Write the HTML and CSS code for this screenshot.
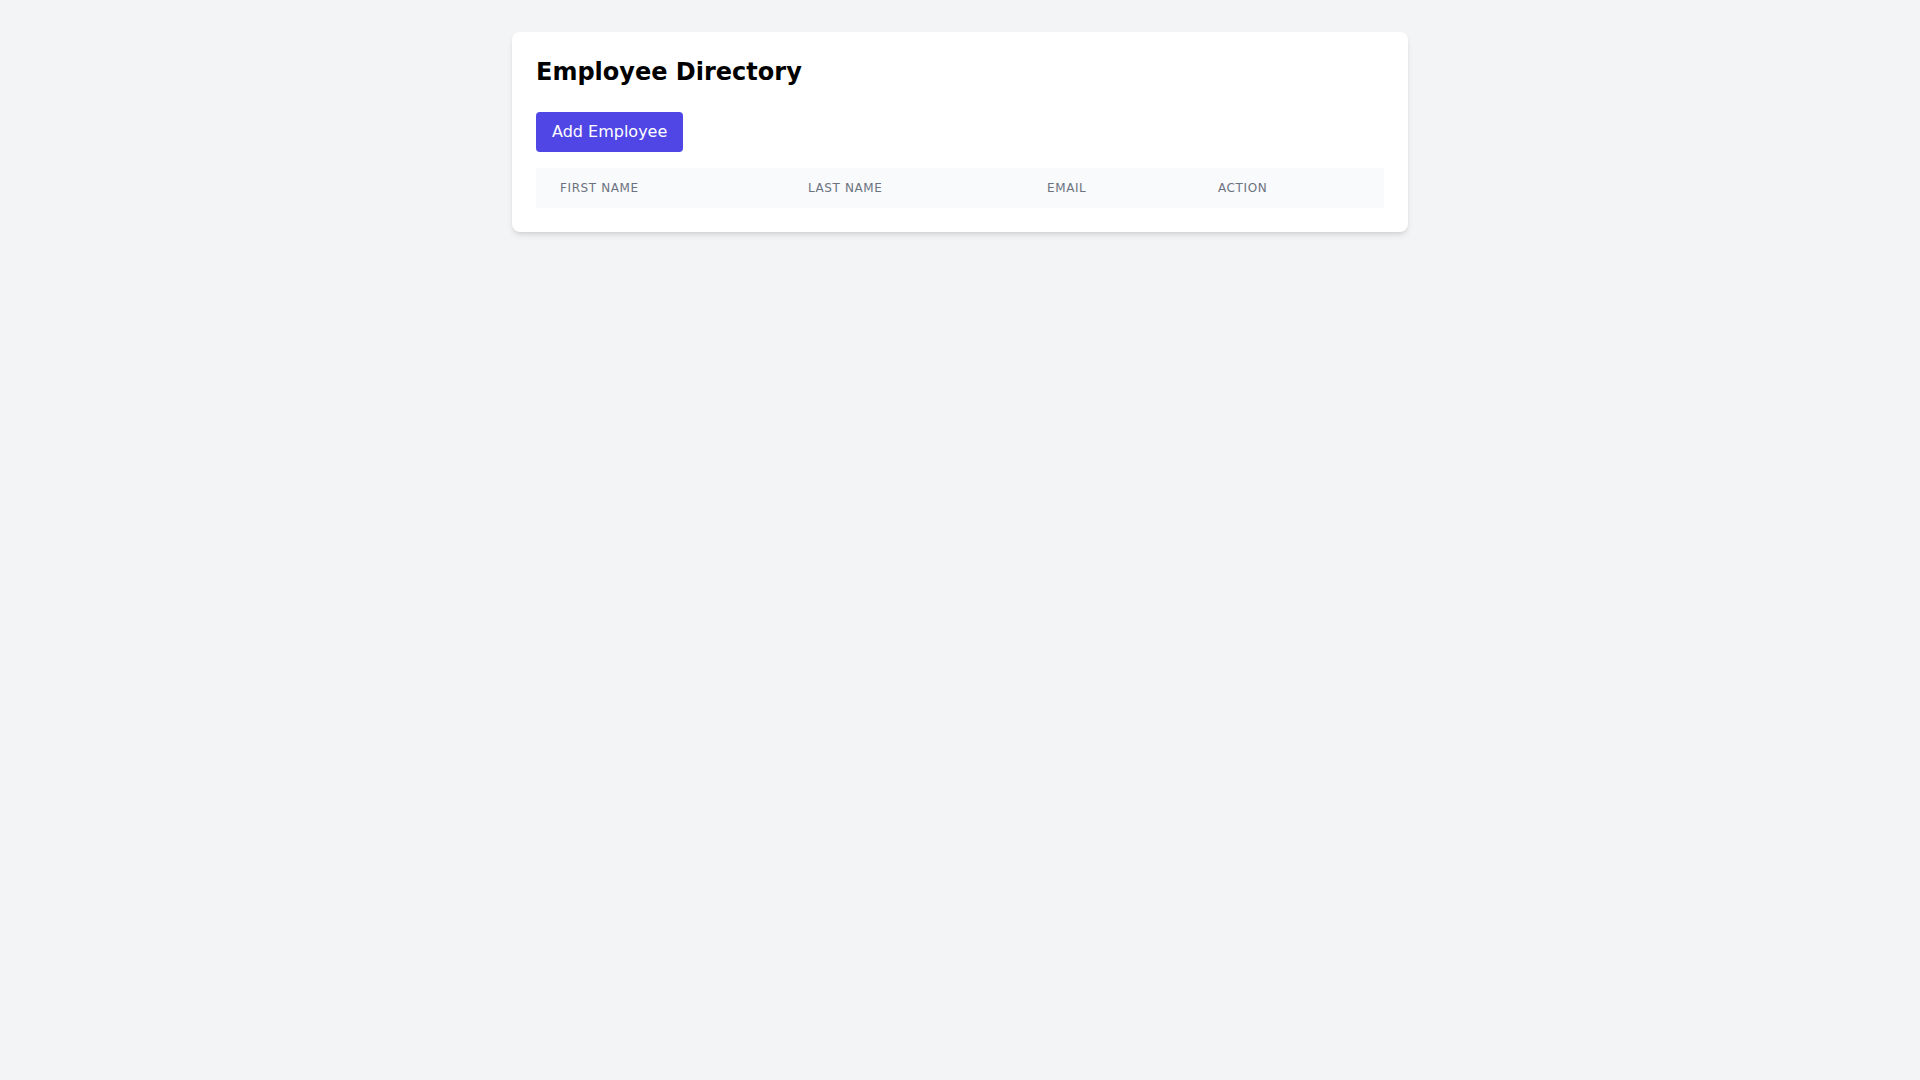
FILE: index.html
```html
<!DOCTYPE html>
<html lang="en">
<head>
<meta charset="UTF-8">
<meta name="viewport" content="width=device-width, initial-scale=1.0">
<title>Employee Directory</title>
<link rel="stylesheet" href="styles.css">
</head>
<body>

<div class="container">
    <h1>Employee Directory</h1>
    <button type="button" id="addBtn">Add Employee</button>
    <table id="employees">
        <colgroup>
            <col class="col-first">
            <col class="col-last">
            <col class="col-email">
            <col class="col-action">
        </colgroup>
        <thead>
            <tr>
                <th>First Name</th>
                <th>Last Name</th>
                <th>Email</th>
                <th>Action</th>
            </tr>
        </thead>
        <tbody>
        </tbody>
    </table>
</div>

</body>
</html>
```

FILE: styles.css
```css
body {
    font-family: "DejaVu Sans", sans-serif;
    margin: 0;
    padding: 32px 0;
    background-color: #f3f4f6;
}

.container {
    max-width: 896px;
    margin: 0 auto;
    padding: 24px;
    box-sizing: border-box;
    background-color: #fff;
    border-radius: 8px;
    box-shadow: 0 4px 6px -1px rgba(0, 0, 0, 0.1), 0 2px 4px -2px rgba(0, 0, 0, 0.1);
}

h1 {
    margin: 0 0 24px 0;
    font-size: 24px;
    line-height: 32px;
    font-weight: bold;
    color: #000;
}

button {
    display: block;
    padding: 8px 16px;
    background-color: #4f46e5;
    color: #fff;
    border: none;
    border-radius: 4px;
    font-family: inherit;
    font-size: 16px;
    line-height: 24px;
    cursor: pointer;
}

table {
    margin-top: 16px;
    width: 100%;
    border-collapse: collapse;
    table-layout: fixed;
}

.col-first { width: 248px; }
.col-last { width: 239px; }
.col-email { width: 171px; }
.col-action { width: 190px; }

thead {
    background-color: #f9fafb;
}

th {
    padding: 12px 24px;
    text-align: left;
    font-size: 12px;
    line-height: 16px;
    font-weight: normal;
    color: #6b7280;
    text-transform: uppercase;
    letter-spacing: 0.05em;
}
```
